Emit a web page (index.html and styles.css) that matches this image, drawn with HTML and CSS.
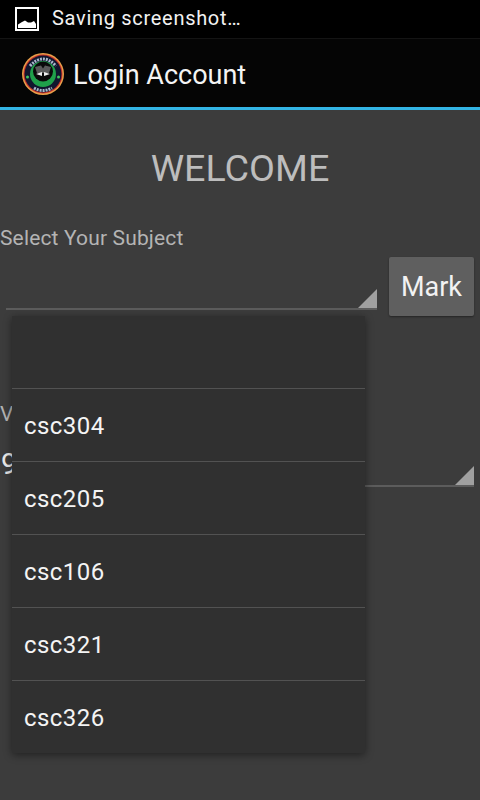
FILE: index.html
```html
<!DOCTYPE html>
<html lang="en">
<head>
    <meta charset="UTF-8">
    <meta name="viewport" content="width=device-width, initial-scale=1.0">
    <title>Login Account</title>
    <link rel="stylesheet" href="styles.css">
</head>
<body>
    <div class="status-bar">
        <svg class="status-icon" width="24" height="24" viewBox="0 0 24 24">
            <rect x="1" y="1" width="22" height="22" fill="#000" stroke="#fff" stroke-width="2"/>
            <path d="M3 21V17.5L7 15L10 13.5L13 15.5L16 15.5L19 14L21 17V21Z" fill="#fff"/>
        </svg>
        <span class="status-text">Saving screenshot…</span>
    </div>
    <header class="action-bar">
        <svg class="logo" width="42" height="42" viewBox="0 0 42 42">
            <circle cx="21" cy="21" r="21" fill="#e8a04a"/>
            <circle cx="21" cy="21" r="19.500" fill="#c8302c"/>
            <circle cx="21" cy="21" r="18.500" fill="#11162e"/>
            <circle cx="21" cy="21" r="13" fill="#1fa04a"/>
            <circle cx="21" cy="18.500" r="10" fill="#0a0a0a"/>
            <path d="M13 14L19 12.500L21 15.500L23 12.500L29 14L27 20L15 20Z" fill="#5a5a5a"/>
            <path d="M14 21L20 19L20 23ZM28 21L22 19L22 23Z" fill="#eee"/>
            <circle cx="5.500" cy="24" r="1.500" fill="#3fc45e"/>
            <circle cx="36.500" cy="24" r="1.500" fill="#3fc45e"/>
            <path d="M8 13Q21 -1 34 13" fill="none" stroke="#aab8cc" stroke-width="3" stroke-dasharray="2 1"/>
            <path d="M12 35Q21 40 30 35" fill="none" stroke="#aab8cc" stroke-width="3" stroke-dasharray="2 1"/>
        </svg>
        <h1 class="action-title">Login Account</h1>
    </header>
    <main class="content">
        <h2 class="welcome">WELCOME</h2>
        <div class="label">Select Your Subject</div>
        <div class="subject-row">
            <div class="spinner"></div>
            <button class="mark-btn">Mark</button>
        </div>
        <div class="label label-second">V</div>
        <div class="spinner spinner-second"><span class="spinner-value">9</span></div>

        <!-- lista desplegable abierta -->
        <ul class="dropdown">
            <li></li>
            <li>csc304</li>
            <li>csc205</li>
            <li>csc106</li>
            <li>csc321</li>
            <li>csc326</li>
        </ul>
    </main>
</body>
</html>
```

FILE: styles.css
```css
html, body {
    height: 100%;
}
body {
    font-family: Roboto, "Liberation Sans", sans-serif;
    margin: 0;
    padding: 0;
    height: 800px;
    overflow: hidden;
    background-color: #3c3c3c;
    display: flex;
    flex-direction: column;
}
.status-bar {
    height: 38px;
    background-color: #000;
    border-bottom: 1px solid #141414;
    display: flex;
    align-items: center;
    padding-left: 15px;
    color: #fff;
    flex-shrink: 0;
}
.status-icon {
    margin-right: 13px;
}
.status-text {
    padding-bottom: 2px;
    font-size: 20px;
    letter-spacing: 0.7px;
    color: #f2f2f2;
}
.action-bar {
    height: 68px;
    background-color: #050505;
    border-bottom: 3px solid #33b5e5;
    display: flex;
    align-items: center;
    padding-left: 22px;
    flex-shrink: 0;
}
.logo {
    margin-top: 2px;
    margin-right: 9px;
}
.action-title {
    margin: 3px 0 0;
    font-size: 27px;
    font-weight: 400;
    color: #f4f4f4;
}
.content {
    position: relative;
    flex: 1;
}
.welcome {
    margin: 0;
    padding-top: 37px;
    height: 43px;
    line-height: 43px;
    text-align: center;
    font-size: 37.700px;
    font-weight: 400;
    color: #bdbdbd;
}
.label {
    margin-top: 36px;
    font-size: 21px;
    line-height: 25px;
    letter-spacing: 0.15px;
    color: #b4b4b4;
}
.subject-row {
    display: flex;
    align-items: flex-start;
    margin-top: 6px;
    padding: 0 6px;
}
.spinner {
    position: relative;
    flex: 1;
    height: 51px;
    border-bottom: 2px solid #5c5c5c;
    margin-right: 12px;
}
.spinner::after {
    content: "";
    position: absolute;
    right: 0;
    bottom: 0;
    border-style: solid;
    border-width: 0 0 19px 19px;
    border-color: transparent transparent #a0a0a0 transparent;
}
.mark-btn {
    width: 85px;
    height: 59px;
    background-color: #5f5f5f;
    color: #f2f2f2;
    border: none;
    border-radius: 2px;
    box-shadow: 0 1px 2px rgba(0,0,0,0.4);
    font-family: inherit;
    font-size: 27px;
    padding: 0;
}
.label-second {
    margin-top: 86px;
}
.spinner-second {
    flex: none;
    height: 43px;
    padding-top: 7px;
    margin: 8px 6px 0 14px;
    color: #e8e8e8;
}
.spinner-value {
    display: block;
    margin-left: -13px;
    font-size: 29px;
    line-height: 44px;
}
.dropdown {
    position: absolute;
    left: 12px;
    top: 206px;
    width: 353px;
    margin: 0;
    padding: 0;
    list-style-type: none;
    background-color: #303030;
    box-shadow: 0 2px 8px rgba(0,0,0,0.45);
}
.dropdown li {
    height: 72px;
    line-height: 74px;
    padding-left: 12px;
    border-top: 1px solid #525252;
    font-size: 24px;
    letter-spacing: 0.45px;
    color: #f4f4f4;
}
.dropdown li:first-child {
    border-top: none;
}
```
